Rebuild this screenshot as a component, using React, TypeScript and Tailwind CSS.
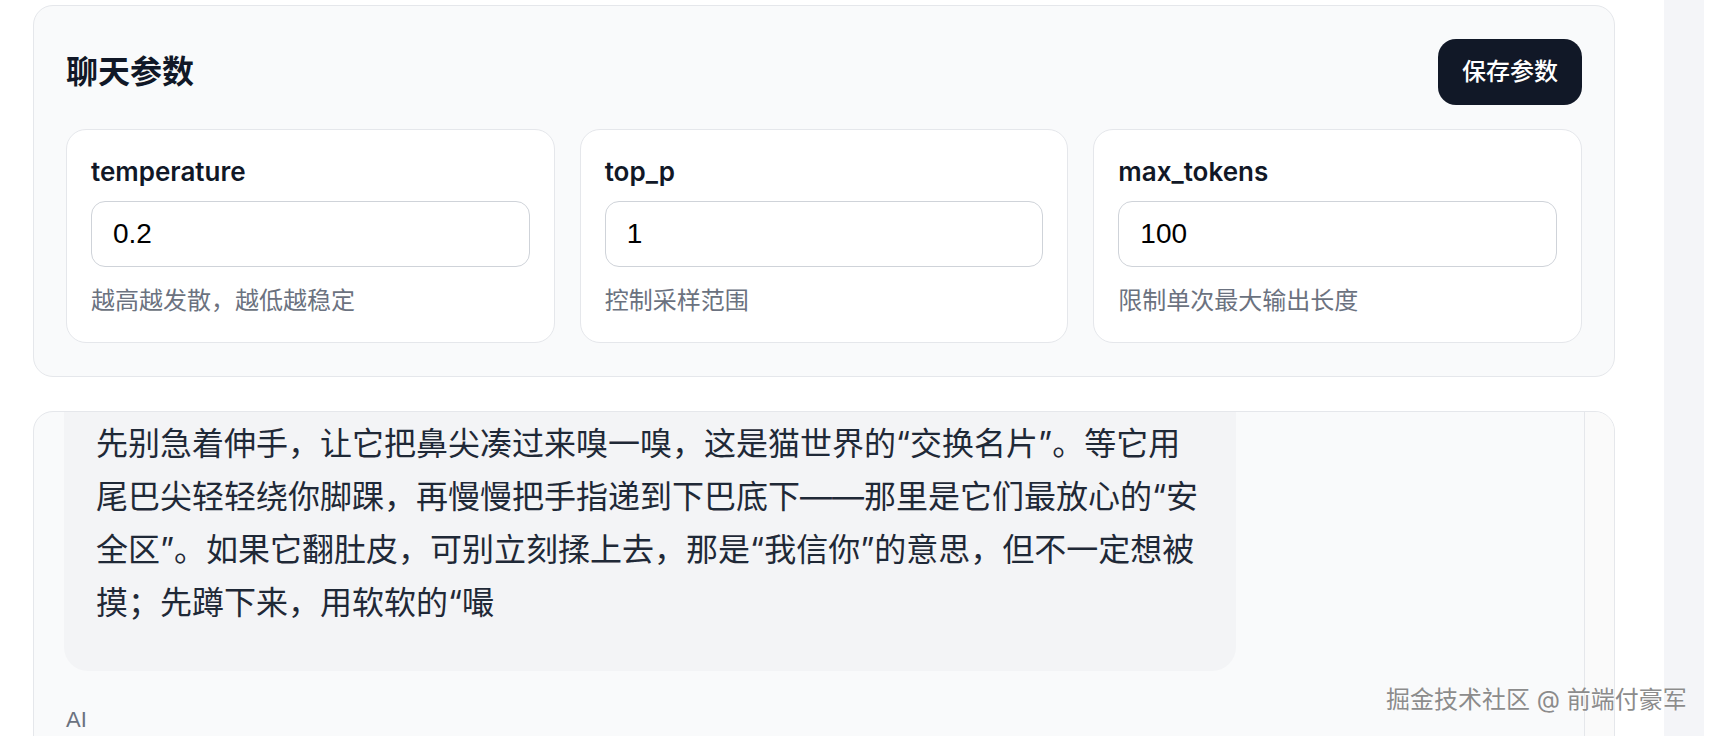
import React from "react";

const params = [
  { key: "temperature", value: "0.2", hint: "越高越发散，越低越稳定" },
  { key: "top_p", value: "1", hint: "控制采样范围" },
  { key: "max_tokens", value: "100", hint: "限制单次最大输出长度" },
];

const reply =
  "先别急着伸手，让它把鼻尖凑过来嗅一嗅，这是猫世界的“交换名片”。等它用尾巴尖轻轻绕你脚踝，再慢慢把手指递到下巴底下——那里是它们最放心的“安全区”。如果它翻肚皮，可别立刻揉上去，那是“我信你”的意思，但不一定想被摸；先蹲下来，用软软的“嘬";

function ParamCard({ name, value, hint }: { name: string; value: string; hint: string }) {
  return (
    <div className="rounded-[20px] border border-[#e5e7eb] bg-white px-6 pt-6 pb-[23px]">
      <label className="block text-[26px] leading-[36px] font-semibold text-[#111827] font-['Inter','Noto_Sans_CJK_SC',sans-serif]">
        {name}
      </label>
      <input
        defaultValue={value}
        className="mt-[11px] block h-[66px] w-full rounded-[14px] border border-[#cfd3d9] bg-white px-[21px] text-[28px] text-black outline-none font-['Liberation_Sans',sans-serif]"
      />
      <p className="mt-4 text-[24px] leading-[36px] text-[#6b7280] font-['Inter','Noto_Sans_CJK_SC',sans-serif]">
        {hint}
      </p>
    </div>
  );
}

export default function App() {
  return (
    <div className="relative flex h-screen overflow-hidden bg-white font-['Inter','Noto_Sans_CJK_SC',sans-serif]">
      <main className="w-[1664px] shrink-0 pt-[5px] pl-[33px] pr-[49px]">
        {/* Params */}
        <section className="rounded-[20px] border border-[#e5e7eb] bg-[#f9fafb] px-8 pt-[33px] pb-[33px]">
          <div className="flex h-[66px] items-center justify-between">
            <h1 className="text-[32px] leading-none font-bold text-[#111827]">聊天参数</h1>
            <button className="h-[66px] rounded-[18px] bg-[#111827] px-6 text-[24px] font-medium text-white">
              保存参数
            </button>
          </div>
          <div className="mt-6 grid grid-cols-3 gap-[25px]">
            {params.map((p) => (
              <ParamCard key={p.key} name={p.key} value={p.value} hint={p.hint} />
            ))}
          </div>
        </section>

        {/* Chat */}
        <section className="mt-[34px] flex h-[420px] overflow-hidden rounded-[20px] border border-[#e5e7eb] bg-[#f9fafb]">
          <div className="flex-1 px-[30px]">
            <div className="w-[1172px] rounded-b-[24px] bg-[#f3f4f6] px-8 pt-[5px] pb-[42px] text-[32px] leading-[53px] text-[#1f2937]">
              {reply}
            </div>
            <div className="mt-[33px] pl-[2px] text-[22px] leading-[32px] text-[#6b7280] font-['Liberation_Sans',sans-serif]">
              AI
            </div>
          </div>
          <div className="w-[30px] border-l border-[#e5e7eb] bg-[#fafafa]" />
        </section>
      </main>
      <div className="w-10 shrink-0 bg-[#f4f5f8]" />
      <div className="flex-1" />

      <div className="pointer-events-none absolute top-[685px] left-[1386px] text-[24px] leading-[30px] whitespace-nowrap text-[#8c8c8c] [text-shadow:0_0_2px_#fff,0_0_1px_#fff]">
        掘金技术社区 @ 前端付豪军
      </div>
    </div>
  );
}
